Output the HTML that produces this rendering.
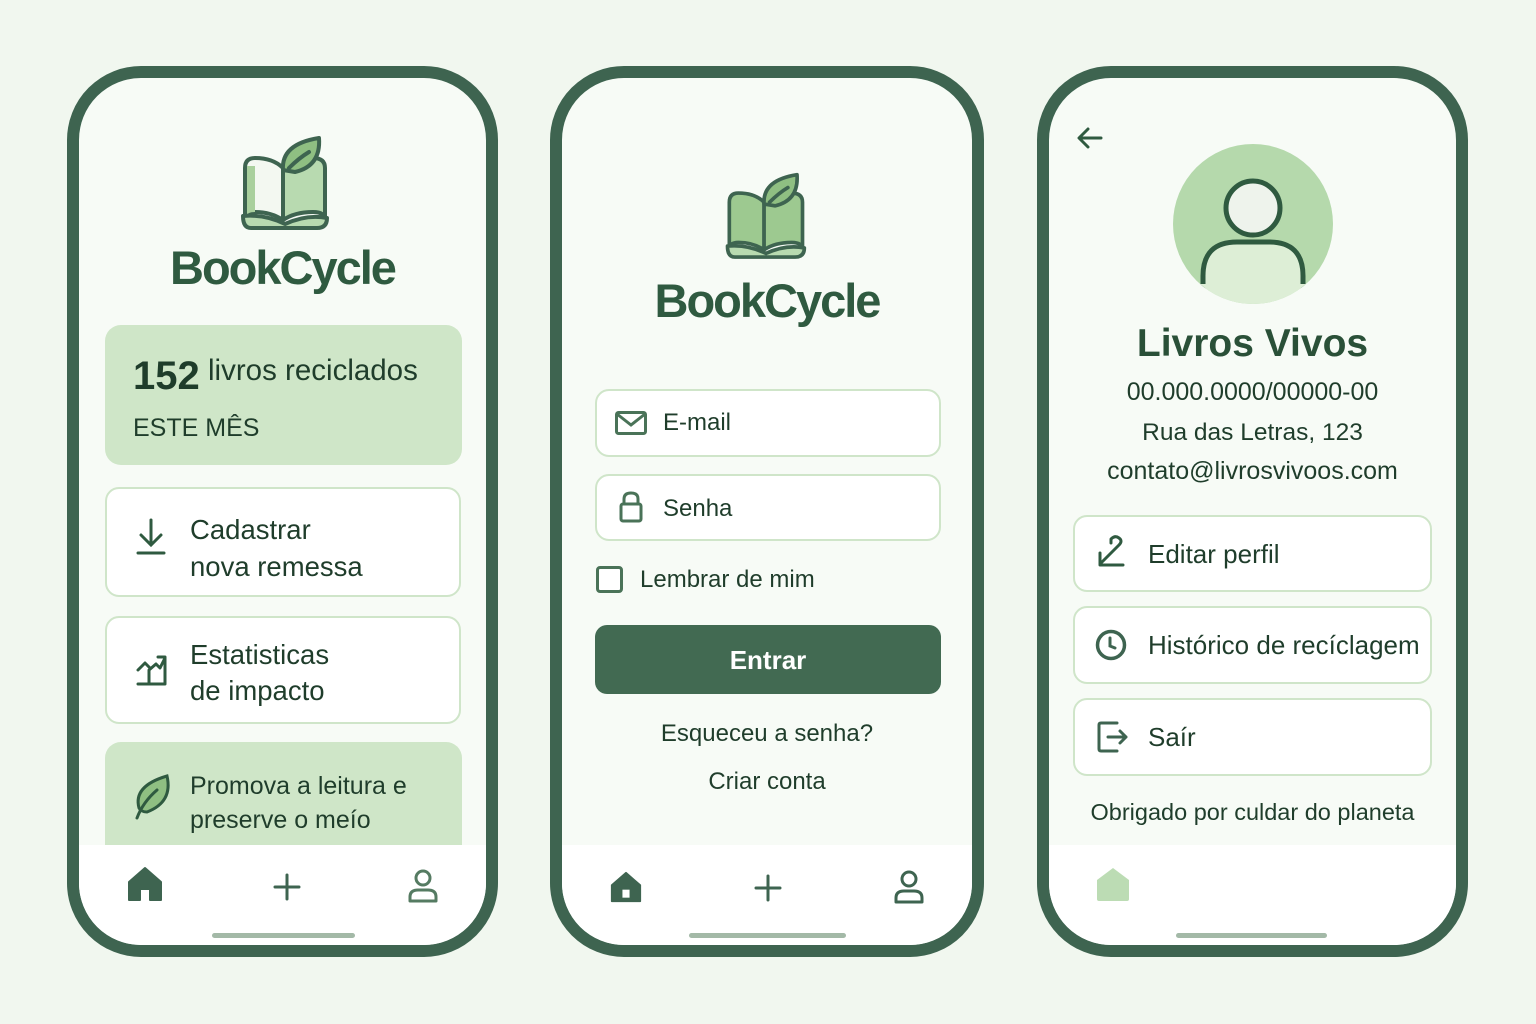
<!DOCTYPE html>
<html><head><meta charset="utf-8"><style>
*{box-sizing:border-box;margin:0;padding:0}
body{width:1536px;height:1024px;background:#f1f7ef;font-family:"Liberation Sans",sans-serif;color:#1f3d2b;position:relative;overflow:hidden}
.ph{position:absolute;top:66px;height:891px;border:12px solid #3e6450;border-radius:74px;background:#f7fbf6;overflow:hidden}
.ph *{position:absolute}
.nav{left:0;right:0;top:767px;bottom:0;background:#fff}
.ind{height:5px;border-radius:3px;background:#a3b9a7;top:855px}
.t{white-space:nowrap;line-height:1}
.brand{font-weight:bold;font-size:47px;letter-spacing:-2px;color:#2f5a40;text-align:center;width:100%;left:0}
.card{background:#fff;border:2px solid #cfe5c9;border-radius:14px}
.g{background:#cfe6c8;border-radius:16px}
svg{overflow:visible}
</style></head><body>

<!-- Phone 1 -->
<div class="ph" style="left:67px;width:431px">
  <svg style="left:158px;top:58px" width="94" height="92" viewBox="0 0 94 92">
    <path d="M8 32 Q8 22 18 22 Q36 22 46 32 L46 84 Q34 76 18 76 Q8 76 8 84 Z" fill="#f3f8f1" stroke="#3e6450" stroke-width="4" stroke-linejoin="round"/>
    <path d="M10 30 L18 30 L18 76 Q10 76 10 80 Z" fill="#a9d09d"/>
    <path d="M46 32 Q56 22 76 22 Q88 22 88 32 L88 84 Q88 76 76 76 Q58 76 46 84 Z" fill="#b8dab0" stroke="#3e6450" stroke-width="4" stroke-linejoin="round"/>
    <path d="M6 80 Q6 92 14 92 L80 92 Q90 92 90 82 Q70 78 48 88 Q28 78 6 80Z" fill="#b8dab0" stroke="#3e6450" stroke-width="4" stroke-linejoin="round"/>
    <path d="M46 34 Q44 8 82 2 Q84 30 58 36 Z" fill="#8fbf82" stroke="#3e6450" stroke-width="4" stroke-linejoin="round"/>
    <path d="M52 32 Q62 22 72 16" stroke="#3e6450" stroke-width="4" fill="none" stroke-linecap="round"/>
  </svg>
  <div class="t brand" style="top:166px">BookCycle</div>
  <div class="g" style="left:26px;top:247px;width:357px;height:140px"></div>
  <div class="t" style="left:54px;top:278px;font-size:40px;font-weight:bold">152</div>
  <div class="t" style="left:129px;top:278px;font-size:29.5px">livros reciclados</div>
  <div class="t" style="left:54px;top:338px;font-size:25px">ESTE MÊS</div>

  <div class="card" style="left:26px;top:409px;width:356px;height:110px"></div>
  <svg style="left:57px;top:440px" width="30" height="38" viewBox="0 0 30 38"><path d="M15 2 V26 M5 17 L15 27 L25 17 M2 35 H28" stroke="#2f5a40" stroke-width="3" fill="none" stroke-linecap="round"/></svg>
  <div class="t" style="left:111px;top:433px;font-size:27.5px;line-height:37px">Cadastrar<br>nova remessa</div>

  <div class="card" style="left:26px;top:538px;width:356px;height:108px"></div>
  <svg style="left:57px;top:572px" width="32" height="36" viewBox="0 0 32 36"><path d="M2 20 L9 13 L14 18 M13 34 V20 L20 14 L24 18 L29 8 M22 7 L29 7 L29 34 M2 34 H29" stroke="#2f5a40" stroke-width="3" fill="none" stroke-linecap="round" stroke-linejoin="round"/></svg>
  <div class="t" style="left:111px;top:559px;font-size:27.5px;line-height:36px">Estatisticas<br>de impacto</div>

  <div class="g" style="left:26px;top:664px;width:357px;height:140px"></div>
  <svg style="left:54px;top:694px" width="40" height="50" viewBox="0 0 40 50"><path d="M6 36 Q0 14 34 4 Q40 30 14 40 Q8 40 6 36Z" fill="#8fbf82" stroke="#2f5a40" stroke-width="3"/><path d="M4 46 Q10 30 24 18" stroke="#2f5a40" stroke-width="3" fill="none" stroke-linecap="round"/></svg>
  <div class="t" style="left:111px;top:691px;font-size:25px;line-height:34px">Promova a leitura e<br>preserve o meío</div>

  <div class="nav"></div>
  <svg style="left:48px;top:788px" width="36" height="36" viewBox="0 0 36 36"><path d="M2 16 L18 2 L34 16 V34 H23 V23 H13 V34 H2Z" fill="#3e6450" stroke="#3e6450" stroke-width="2" stroke-linejoin="round"/></svg>
  <svg style="left:195px;top:796px" width="26" height="26" viewBox="0 0 26 26"><path d="M13 1V25M1 13H25" stroke="#3e6450" stroke-width="3" stroke-linecap="round"/></svg>
  <svg style="left:329px;top:791px" width="30" height="34" viewBox="0 0 30 34"><circle cx="15" cy="9" r="7" fill="none" stroke="#557b62" stroke-width="3"/><path d="M2 32 V28 Q2 21 10 21 H20 Q28 21 28 28 V32Z" fill="none" stroke="#557b62" stroke-width="3" stroke-linejoin="round"/></svg>
  <div class="ind" style="left:133px;width:143px"></div>
</div>

<!-- Phone 2 -->
<div class="ph" style="left:550px;width:434px">
  <svg style="left:160px;top:92px" width="86" height="90" viewBox="0 0 94 92">
    <path d="M8 32 Q8 22 18 22 Q36 22 46 32 L46 84 Q34 76 18 76 Q8 76 8 84 Z" fill="#9dc990" stroke="#3e6450" stroke-width="4" stroke-linejoin="round"/>
    <path d="M46 32 Q56 22 76 22 Q88 22 88 32 L88 84 Q88 76 76 76 Q58 76 46 84 Z" fill="#9dc990" stroke="#3e6450" stroke-width="4" stroke-linejoin="round"/>
    <path d="M6 80 Q6 92 14 92 L80 92 Q90 92 90 82 Q70 78 48 88 Q28 78 6 80Z" fill="#b8dab0" stroke="#3e6450" stroke-width="4" stroke-linejoin="round"/>
    <path d="M46 34 Q44 8 82 2 Q84 30 58 36 Z" fill="#8fbf82" stroke="#3e6450" stroke-width="4" stroke-linejoin="round"/>
    <path d="M52 32 Q62 22 72 16" stroke="#3e6450" stroke-width="4" fill="none" stroke-linecap="round"/>
  </svg>
  <div class="t brand" style="top:199px">BookCycle</div>

  <div class="card" style="left:33px;top:311px;width:346px;height:68px"></div>
  <svg style="left:53px;top:333px" width="32" height="24" viewBox="0 0 32 24"><rect x="1.5" y="1.5" width="29" height="21" rx="2" fill="none" stroke="#4a7358" stroke-width="3"/><path d="M2 3 L16 14 L30 3" fill="none" stroke="#4a7358" stroke-width="3"/></svg>
  <div class="t" style="left:101px;top:333px;font-size:24px">E-mail</div>

  <div class="card" style="left:33px;top:396px;width:346px;height:67px"></div>
  <svg style="left:57px;top:413px" width="24" height="32" viewBox="0 0 24 32"><path d="M5 13 V8 Q5 2 12 2 Q19 2 19 8 V13" fill="none" stroke="#4a7358" stroke-width="3"/><rect x="2" y="13" width="20" height="17" rx="2" fill="none" stroke="#4a7358" stroke-width="3"/></svg>
  <div class="t" style="left:101px;top:419px;font-size:24px">Senha</div>

  <div style="left:34px;top:488px;width:27px;height:27px;border:3px solid #4a7358;border-radius:4px;background:#fff"></div>
  <div class="t" style="left:78px;top:490px;font-size:24px">Lembrar de mim</div>

  <div style="left:33px;top:547px;width:346px;height:69px;background:#426a52;border-radius:12px"></div>
  <div class="t" style="left:33px;width:346px;text-align:center;top:569px;font-size:26px;font-weight:bold;color:#fff">Entrar</div>
  <div class="t" style="left:0;width:100%;text-align:center;top:644px;font-size:24px">Esqueceu a senha?</div>
  <div class="t" style="left:0;width:100%;text-align:center;top:692px;font-size:24px">Criar conta</div>

  <div class="nav"></div>
  <svg style="left:48px;top:793px" width="32" height="32" viewBox="0 0 36 36"><path d="M2 16 L18 2 L34 16 V34 H2Z" fill="#3e6450" stroke="#3e6450" stroke-width="2" stroke-linejoin="round"/><rect x="14" y="21" width="8" height="9" fill="#fff"/></svg>
  <svg style="left:193px;top:797px" width="26" height="26" viewBox="0 0 26 26"><path d="M13 1V25M1 13H25" stroke="#3e6450" stroke-width="3" stroke-linecap="round"/></svg>
  <svg style="left:332px;top:792px" width="30" height="34" viewBox="0 0 30 34"><circle cx="15" cy="9" r="7" fill="none" stroke="#3e6450" stroke-width="3"/><path d="M2 32 V28 Q2 21 10 21 H20 Q28 21 28 28 V32Z" fill="none" stroke="#3e6450" stroke-width="3" stroke-linejoin="round"/></svg>
  <div class="ind" style="left:127px;width:157px"></div>
</div>

<!-- Phone 3 -->
<div class="ph" style="left:1037px;width:431px">
  <svg style="left:28px;top:49px" width="26" height="22" viewBox="0 0 26 22"><path d="M24 11 H3 M11 2 L2 11 L11 20" stroke="#2f5a40" stroke-width="3" fill="none" stroke-linecap="round" stroke-linejoin="round"/></svg>
  <svg style="left:124px;top:66px" width="160" height="160" viewBox="0 0 160 160">
    <defs><clipPath id="c"><circle cx="80" cy="80" r="80"/></clipPath></defs>
    <circle cx="80" cy="80" r="80" fill="#b5d9ac"/>
    <g clip-path="url(#c)">
      <path d="M30 150 V132 Q30 98 64 98 H96 Q130 98 130 132 V150" fill="#ddeed6" stroke="#2f5a40" stroke-width="5"/>
      <rect x="0" y="140" width="160" height="30" fill="#ddeed6"/>
    </g>
    <circle cx="80" cy="64" r="27" fill="#eef3ec" stroke="#2f5a40" stroke-width="5"/>
  </svg>
  <div class="t" style="left:0;width:100%;text-align:center;top:246px;font-size:39px;font-weight:bold;color:#2a5038">Livros Vivos</div>
  <div class="t" style="left:0;width:100%;text-align:center;top:302px;font-size:25px">00.000.0000/00000-00</div>
  <div class="t" style="left:0;width:100%;text-align:center;top:343px;font-size:24.5px">Rua das Letras, 123</div>
  <div class="t" style="left:0;width:100%;text-align:center;top:381px;font-size:25px">contato@livrosvivoos.com</div>

  <div class="card" style="left:24px;top:437px;width:359px;height:77px"></div>
  <svg style="left:48px;top:457px" width="28" height="32" viewBox="0 0 28 32"><path d="M3 30 V18 M3 30 H26 M4 28 L22 10 Q26 6 22 3 Q18 0 14 4 L14 8" stroke="#2f5a40" stroke-width="3" fill="none" stroke-linecap="round" stroke-linejoin="round"/></svg>
  <div class="t" style="left:99px;top:463px;font-size:26px">Editar perfil</div>

  <div class="card" style="left:24px;top:528px;width:359px;height:78px"></div>
  <svg style="left:46px;top:551px" width="32" height="32" viewBox="0 0 32 32"><circle cx="16" cy="16" r="13.5" fill="none" stroke="#3e6450" stroke-width="3.5"/><path d="M15 9 V17 L20 19" stroke="#3e6450" stroke-width="3" fill="none" stroke-linecap="round"/></svg>
  <div class="t" style="left:99px;top:554px;font-size:26px">Histórico de recíclagem</div>

  <div class="card" style="left:24px;top:620px;width:359px;height:78px"></div>
  <svg style="left:48px;top:643px" width="32" height="32" viewBox="0 0 32 32"><path d="M20 2 H4 Q2 2 2 4 V28 Q2 30 4 30 H20" stroke="#3e6450" stroke-width="3" fill="none" stroke-linecap="round"/><path d="M11 16 H29 M23 10 L29 16 L23 22" stroke="#3e6450" stroke-width="3" fill="none" stroke-linecap="round" stroke-linejoin="round"/></svg>
  <div class="t" style="left:99px;top:646px;font-size:26px">Saír</div>

  <div class="t" style="left:0;width:100%;text-align:center;top:723px;font-size:23.5px">Obrigado por culdar do planeta</div>

  <div class="nav"></div>
  <svg style="left:47px;top:790px" width="34" height="34" viewBox="0 0 34 34"><path d="M1 12 L17 0 L33 12 V31 Q33 33 31 33 H3 Q1 33 1 31Z" fill="#bcdcb4"/></svg>
  <div class="ind" style="left:127px;width:151px"></div>
</div>
</body></html>
